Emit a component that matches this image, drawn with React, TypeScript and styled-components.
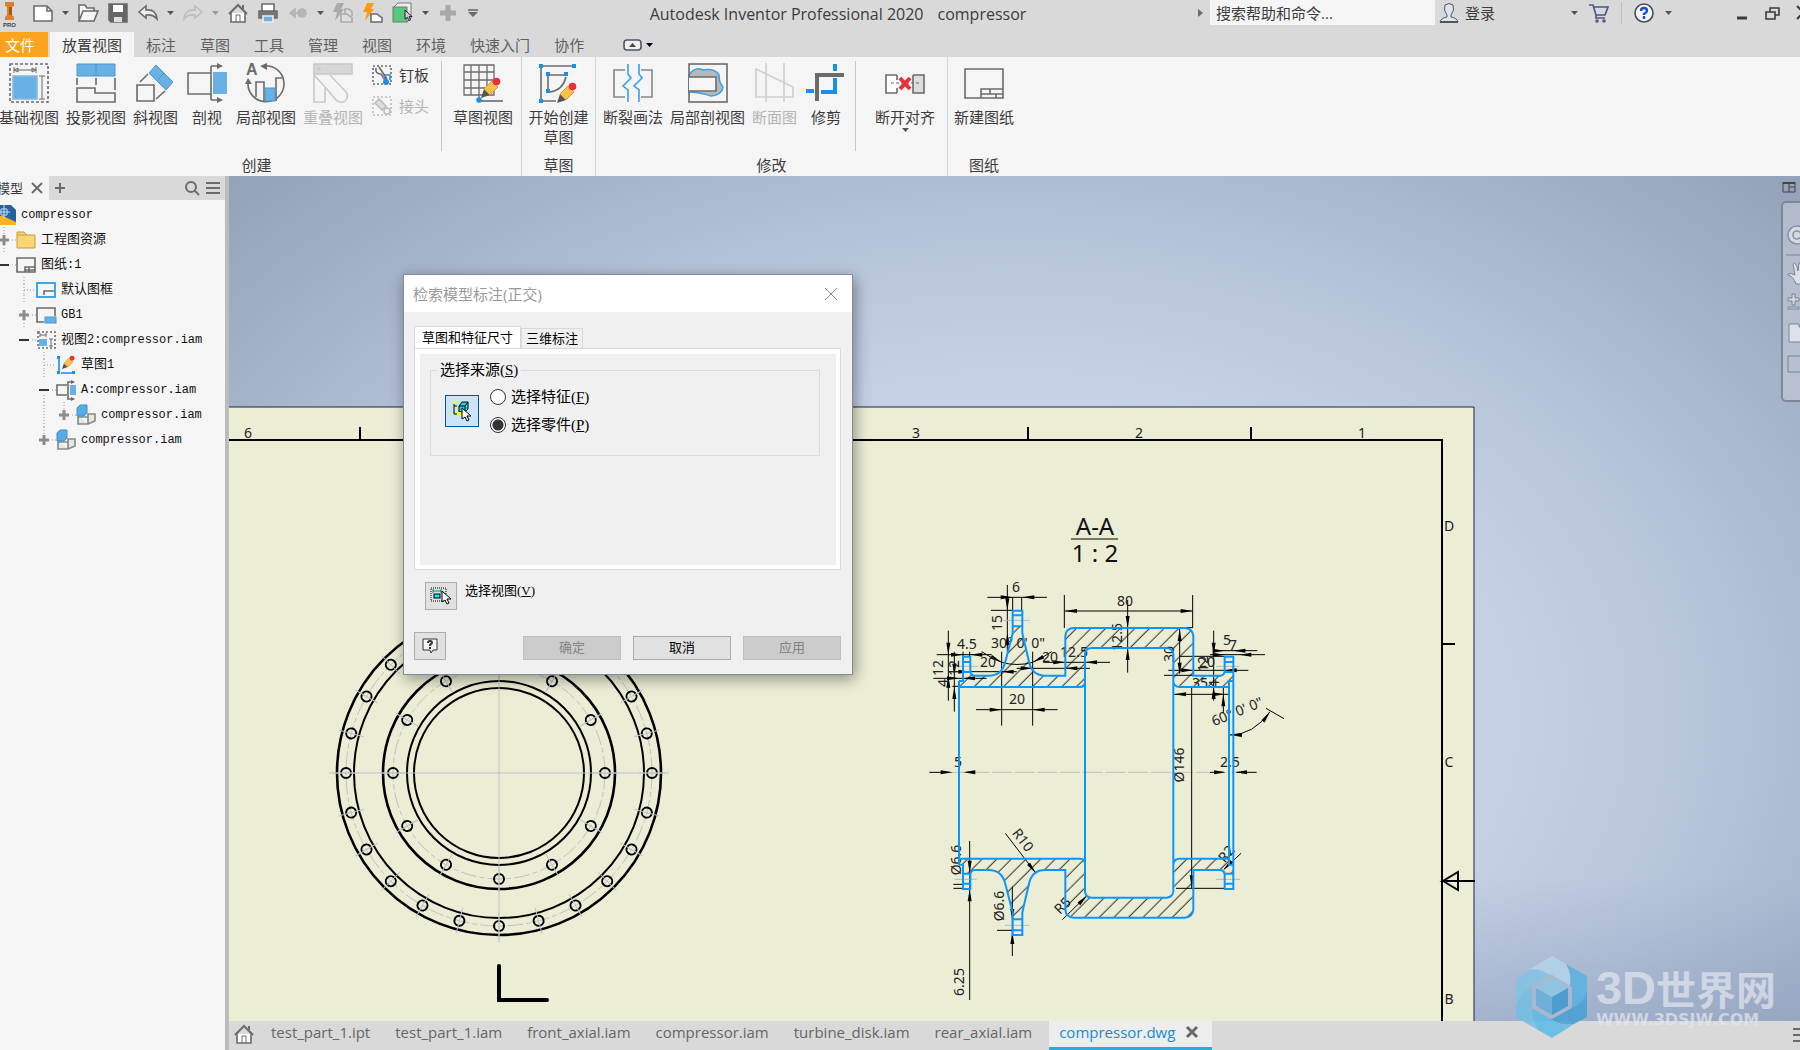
import React from "react";
import styled, { createGlobalStyle } from "styled-components";

const UI = '"Open Sans", "Noto Sans CJK SC", sans-serif';
const MONO = '"Liberation Mono", "Noto Sans CJK SC", monospace';
const G = "#6b6b6b";
const B = "#68b0e6";
const BL = "#1a8fe8";

const Global = createGlobalStyle`
  * { box-sizing: border-box; }
  body { margin: 0; overflow: hidden; background: #f5f5f5; color: #3c3c3c; font: 15px/20px ${UI}; }
  button, input { font: inherit; color: inherit; }
  button { margin: 0; padding: 0; border: 0; background: none; }
  svg { display: block; flex: none; overflow: visible; }
`;

const Shell = styled.div`
  height: 100vh;
  display: flex;
  flex-direction: column;
  overflow: hidden;
`;

/* ---------- title bar ---------- */
const TitleBar = styled.header`
  display: flex;
  align-items: flex-start;
  height: 32px;
  background: #d9d9d9;
`;
const QuickAccess = styled.div`
  display: flex;
  align-items: center;
  gap: 10px;
  height: 25px;
`;
const ProLogo = styled.div`
  width: 23px;
  height: 25px;
`;
const IconButton = styled.button<{ $w?: number }>`
  display: flex;
  align-items: center;
  justify-content: center;
  width: ${(p) => p.$w ?? 20}px;
  height: 25px;
`;
const Title = styled.h1`
  flex: 1;
  margin: 0;
  display: flex;
  justify-content: center;
  gap: 14px;
  font-size: 16px;
  font-weight: 400;
  line-height: 28px;
  white-space: nowrap;
`;
const Search = styled.input`
  width: 225px;
  height: 25px;
  margin-left: 6px;
  padding: 0 6px;
  border: 0;
  background: #f5f5f5;
  &::placeholder { color: #3c3c3c; opacity: 1; }
`;
const SignIn = styled.button`
  display: flex;
  align-items: center;
  gap: 6px;
  width: 133px;
  height: 25px;
  margin-left: 4px;
`;
const Account = styled.div`
  display: flex;
  align-items: center;
  gap: 12px;
  height: 25px;
`;
const Separator = styled.span`
  width: 1px;
  height: 22px;
  background: #bdbdbd;
`;
const WindowControls = styled.div`
  display: flex;
  gap: 16px;
  height: 25px;
  margin: 0 -10px 0 65px;
`;

/* ---------- ribbon ---------- */
const TabRow = styled.nav`
  display: flex;
  height: 25px;
  background: #d9d9d9;
`;
const RibbonTab = styled.button<{ $active?: boolean }>`
  padding: 0 12px;
  background: ${(p) => (p.$active ? "#f5f5f5" : "transparent")};
  color: ${(p) => (p.$active ? "#3c3c3c" : "#5f5f5f")};
  white-space: nowrap;
`;
const FileTab = styled.button`
  width: 48px;
  margin-right: 2px;
  padding-right: 8px;
  background: #fba31c;
  color: #fff;
`;
const PanelToggle = styled.button`
  display: flex;
  align-items: center;
  gap: 5px;
  margin-left: 27px;
`;
const Ribbon = styled.section`
  display: flex;
  height: 119px;
  background: #f5f5f5;
`;
const Panel = styled.div<{ $w: number; $last?: boolean; $bleed?: boolean }>`
  display: flex;
  flex-direction: column;
  justify-content: space-between;
  width: ${(p) => p.$w}px;
  margin-left: ${(p) => (p.$bleed ? -8 : 0)}px;
  border-right: ${(p) => (p.$last ? 0 : 1)}px solid #d4d4d4;
`;
const PanelBody = styled.div<{ $center?: boolean }>`
  display: flex;
  justify-content: ${(p) => (p.$center ? "center" : "flex-start")};
  gap: 7px;
  padding: 6px 0 0 ${(p) => (p.$center ? 0 : 7)}px;
  height: 96px;
`;
const PanelName = styled.div`
  height: 21px;
  text-align: center;
`;
const Tool = styled.button<{ $off?: boolean }>`
  display: flex;
  flex-direction: column;
  align-items: center;
  flex: none;
  min-width: 44px;
  color: ${(p) => (p.$off ? "#b4b4b4" : "#3c3c3c")};
  white-space: nowrap;
  & > span { margin-top: 4px; white-space: pre-line; }
`;
const SmallTools = styled.div`
  display: flex;
  flex-direction: column;
  gap: 11px;
  padding: 2px 5px 0 2px;
`;
const SmallTool = styled.button<{ $off?: boolean }>`
  display: flex;
  align-items: center;
  gap: 7px;
  color: ${(p) => (p.$off ? "#b4b4b4" : "#3c3c3c")};
`;
const InnerRule = styled.span<{ $after: number }>`
  width: 1px;
  height: 90px;
  margin: -2px ${(p) => p.$after}px 0 0;
  background: #c8c8c8;
`;

/* ---------- workspace ---------- */
const Work = styled.main`
  flex: 1;
  display: flex;
  min-height: 0;
`;
const Browser = styled.aside`
  width: 229px;
  flex: none;
  overflow: hidden;
  background: #f5f5f5;
  border-right: 4px solid #bcbcbc;
`;
const BrowserHead = styled.div`
  display: flex;
  align-items: center;
  height: 24px;
  padding-right: 5px;
  gap: 6px;
  background: #d9d9d9;
  font-size: 13px;
`;
const BrowserTab = styled.div`
  display: flex;
  align-items: center;
  gap: 9px;
  width: 49px;
  height: 24px;
  background: #f5f5f5;
  & > span { margin-left: -3px; white-space: nowrap; }
`;
const Grow = styled.span`
  flex: 1;
`;
const Tree = styled.ul`
  list-style: none;
  margin: 2px 0 0 -4px;
  padding: 0;
`;
const TreeRow = styled.li<{ $depth: number }>`
  display: flex;
  align-items: center;
  height: 25px;
  padding-left: ${(p) => Math.max(0, p.$depth - 1) * 20}px;
  color: #111;
  font: 12px/16px ${MONO};
  white-space: pre;
`;
const TreeLabel = styled.button`
  display: flex;
  align-items: baseline;
  margin-left: 5px;
`;
const Han = styled.span`
  font-size: 13px;
`;
const Stage = styled.div`
  flex: 1;
  min-width: 0;
  display: flex;
  flex-direction: column;
  position: relative;
`;
const Canvas = styled.div`
  flex: 1;
  position: relative;
  overflow: hidden;
  background:
    linear-gradient(to top, rgba(132, 149, 182, 0.4), rgba(132, 149, 182, 0) 17%),
    radial-gradient(ellipse farthest-corner at 50% 64%, #ccd9eb 0%, #c8d5e8 38%, #b7c5db 62%, #a3b2c9 82%, #93a1b9 100%);
`;
const Drawing = styled.svg`
  width: 100%;
  height: 100%;
  font-family: "Noto Sans", sans-serif;
`;
const ViewLayout = styled.button`
  position: absolute;
  top: 6px;
  right: 5px;
`;
const NavBar = styled.div`
  position: absolute;
  top: 25px;
  right: -22px;
  width: 41px;
  height: 201px;
  display: flex;
  flex-direction: column;
  gap: 10px;
  padding: 22px 4px;
  border: 2px solid #7b8898;
  border-radius: 5px;
  background: rgba(200, 206, 214, 0.55);
`;
const Watermark = styled.div`
  position: absolute;
  right: 24px;
  bottom: 12px;
  display: flex;
  gap: 8px;
`;
const WatermarkText = styled.div`
  padding-top: 8px;
  color: rgba(228, 232, 240, 0.7);
  white-space: nowrap;
`;
const WatermarkName = styled.div`
  display: flex;
  align-items: center;
  height: 47px;
  font: bold 47px/46px "Liberation Sans", sans-serif;
`;
const WatermarkHan = styled.span`
  font: bold 40px/46px "Noto Sans CJK SC", sans-serif;
`;
const WatermarkUrl = styled.div`
  font: bold 16px/18px "DejaVu Sans", sans-serif;
`;

/* ---------- document tabs ---------- */
const DocTabs = styled.nav`
  display: flex;
  gap: 1px;
  height: 29px;
  padding-left: 1px;
  background: #d9d9d9;
  color: #666;
`;
const DocTab = styled.button`
  padding: 0 12px 7px;
  white-space: nowrap;
`;
const ActiveDoc = styled.div`
  display: flex;
  align-items: center;
  gap: 12px;
  margin-left: 4px;
  padding: 0 15px 4px 10px;
  border-bottom: 3px solid #2ea9e0;
  background: #ededed;
  color: #148dd0;
`;

/* ---------- dialog ---------- */
const Dialog = styled.section`
  position: absolute;
  left: 174px;
  top: 98px;
  width: 450px;
  border: 1px solid #868c94;
  background: #f0f0f0;
  color: #000;
  box-shadow: 2px 4px 14px rgba(0, 0, 0, 0.4);
  font: 13px/18px "Liberation Serif", "Noto Sans CJK SC", serif;
`;
const DialogHead = styled.div`
  display: flex;
  align-items: center;
  justify-content: space-between;
  height: 37px;
  padding: 0 15px 0 9px;
  background: #fff;
  color: #999;
  font: 15px/20px ${UI};
`;
const DialogBody = styled.div`
  padding: 14px 11px 14px 10px;
`;
const DialogTabs = styled.div`
  display: flex;
  align-items: flex-end;
`;
const DialogTab = styled.button<{ $active?: boolean }>`
  height: ${(p) => (p.$active ? 22 : 20)}px;
  padding: ${(p) => (p.$active ? "0 7px" : "0 4px")};
  border: 1px solid #d9d9d9;
  border-bottom: 0;
  background: ${(p) => (p.$active ? "#fff" : "#f0f0f0")};
`;
const DialogPage = styled.div`
  height: 222px;
  padding: 5px 4px 4px 5px;
  border: 1px solid #d9d9d9;
  background: #fff;
`;
const PageInner = styled.div`
  height: 100%;
  padding: 7px 16px 0 10px;
  background: #f0f0f0;
`;
const Source = styled.fieldset`
  display: flex;
  align-items: center;
  gap: 11px;
  height: 95px;
  margin: 0;
  padding: 0 14px 12px;
  border: 1px solid #dcdcdc;
  font-size: 15px;
  & > legend { margin-left: -8px; padding: 0 3px; }
`;
const Choices = styled.div`
  display: flex;
  flex-direction: column;
  gap: 8px;
`;
const Choice = styled.label`
  display: flex;
  align-items: center;
  gap: 5px;
  height: 20px;
`;
const Radio = styled.input`
  appearance: none;
  width: 16px;
  height: 16px;
  margin: 0;
  border: 1px solid #333;
  border-radius: 50%;
  background: #fff;
  &:checked { background: radial-gradient(circle, #333 0 5px, #fff 6px); }
`;
const PickButton = styled.button<{ $on?: boolean }>`
  display: flex;
  align-items: center;
  justify-content: center;
  width: ${(p) => (p.$on ? 34 : 32)}px;
  height: ${(p) => (p.$on ? 32 : 28)}px;
  border: 1px solid ${(p) => (p.$on ? "#005499" : "#adadad")};
  background: ${(p) => (p.$on ? "#cce4f7" : "#e1e1e1")};
`;
const PickView = styled.div`
  display: flex;
  gap: 8px;
  padding: 12px 0 22px 11px;
`;
const Actions = styled.div`
  display: flex;
  align-items: flex-end;
  gap: 12px;
`;
const Action = styled.button`
  width: 98px;
  height: 24px;
  border: 1px solid #adadad;
  background: #e1e1e1;
  &:disabled { background: #ccc; border-color: #bfbfbf; color: #838383; }
`;

/* ---------- small drawings ---------- */
type IconProps = { w?: number; h?: number; c?: string; sw?: number; children: React.ReactNode };
const Ico = ({ w = 20, h = 20, c = G, sw = 1.6, children }: IconProps) => (
  <svg width={w} height={h} viewBox={`0 0 ${w} ${h}`} fill="none" stroke={c} strokeWidth={sw} aria-hidden="true">
    {children}
  </svg>
);
const Caret = ({ c = "#555" }: { c?: string }) => (
  <svg width="5" height="5" viewBox="0 0 5 5" aria-hidden="true"><path d="M-1 1H6L2.5 5Z" fill={c} /></svg>
);
const Cross = ({ s = 10, c = G, sw = 2 }: { s?: number; c?: string; sw?: number }) => (
  <Ico w={s} h={s} c={c} sw={sw}><path d={`M0 0L${s} ${s}M${s} 0L0 ${s}`} /></Ico>
);
const House = () => (
  <Ico><path d="M3 10V19H17V10" fill="#fff" /><path d="M1 11L10 2L19 11M15 2V6" strokeWidth="2" /><path d="M8 19V12H12V19" strokeWidth="1" /></Ico>
);
const Pencil = ({ x, y, s = 1 }: { x: number; y: number; s?: number }) => (
  <g transform={`translate(${x} ${y}) scale(${s})`} stroke="none">
    <path d="M0 20L3 11L9 17Z" fill="#555" />
    <path d="M3 11L11 3L17 9L9 17Z" fill="#fbc04a" stroke="#d09a38" strokeWidth="1" />
    <circle cx="15.500" cy="3.500" r="3.800" fill="#ea2f36" />
  </g>
);
const Cursor = ({ x, y, c = "#fff" }: { x: number; y: number; c?: string }) => (
  <path transform={`translate(${x} ${y})`} d="M0 0V11L3 9L5 13L7 12L5 8H9Z" fill={c} stroke="#000" strokeWidth="1" />
);

const BaseIcon = () => (
  <Ico w={40} h={40}>
    <rect x="1" y="1" width="38" height="38" strokeDasharray="3 2" />
    <path d="M5 4V10M27 4V10M5 7H27M5 7L9 5V9ZM27 7L23 5V9ZM33 13V36M30 13H36M30 36H36" strokeWidth="1" />
    <rect x="4" y="13" width="24" height="23" fill={B} stroke="#88b9de" />
  </Ico>
);
const ProjectedIcon = () => (
  <Ico w={40} h={40}>
    <path d="M1 1H39V13H1ZM20 1V13" fill={B} stroke="#4d96cc" strokeWidth="1" />
    <path d="M1 15V22M20 15V22M39 15V27M1 25H19V30H39V39H1Z" />
  </Ico>
);
const AuxIcon = () => (
  <Ico w={40} h={40}>
    <path d="M20 2L37 19L30 27L13 10Z" fill={B} stroke="#4d96cc" strokeWidth="1" />
    <path d="M22 17L28 10" stroke="#4d96cc" strokeWidth="1" />
    <path d="M1 22H18V38H1ZM4 19L12 11M20 36L29 28" />
  </Ico>
);
const SectionIcon = () => (
  <Ico w={40} h={40}>
    <path d="M24 10H1V31H24M24 3V37M24 3H34M24 37H34" />
    <path d="M30 0L36 3L30 6ZM30 34L36 37L30 40Z" fill={G} stroke="none" />
    <rect x="26" y="9" width="14" height="22" fill={B} stroke="none" />
  </Ico>
);
const DetailIcon = () => (
  <Ico w={40} h={40}>
    <text x="0" y="12" fontFamily="Liberation Sans" fontWeight="bold" fontSize="16" fill={G} stroke="none">A</text>
    <path d="M17 3A18 18 0 1 1 2 20" />
    <path d="M21 0V7L14 3ZM-1 21H6L2 15Z" fill={G} stroke="none" />
    <path d="M10 34V19H18V39M30 38V15H36M30 15V24" />
    <rect x="19" y="25" width="10" height="13" fill={B} stroke="#4d96cc" strokeWidth="1" />
  </Ico>
);
const OverlayIcon = () => (
  <Ico w={40} h={40} c="#c9c9c9">
    <path d="M1 12V39H12V24M1 12L12 24L24 38Q30 41 33 37Q36 33 33 29L17 12" />
    <rect x="1" y="1" width="38" height="10" fill="#d6d6d6" />
    <circle cx="6" cy="6" r="1" />
  </Ico>
);
const NailIcon = () => (
  <Ico>
    <rect x="1" y="1" width="18" height="18" strokeDasharray="2 2" />
    <path d="M4 3Q3 9 9 9L14 15M7 2Q9 5 11 8L15 14" />
    <path d="M10 11L14 17" stroke="#b46be8" />
    <circle cx="14" cy="17" r="3" fill={BL} stroke="none" /><path d="M13 10H18V15" stroke={BL} />
  </Ico>
);
const JointIcon = () => (
  <Ico c="#bdbdbd">
    <rect x="1" y="1" width="18" height="18" strokeDasharray="2 2" />
    <path d="M3 7L7 3L14 10L10 14Z" fill="#ddd" /><circle cx="15" cy="15" r="3" />
  </Ico>
);
const SketchViewIcon = () => (
  <Ico w={40} h={40}>
    <path d="M1 2H31V32H1ZM8 2V32M16 2V38M24 2V32M1 9H31M1 17H31M1 25H31" strokeWidth="1.3" />
    <path d="M18 38H40" /><circle cx="16" cy="37" r="2" fill={BL} stroke={BL} />
    <Pencil x={18} y={15} />
  </Ico>
);
const StartSketchIcon = () => (
  <Ico w={40} h={40}>
    <path d="M3 5V36M5 3H34M5 38H18M10 13V26M12 12H26M28 14Q25 27 12 29" />
    <path d="M1 1h4v4h-4zM34 1h4v4h-4zM1 36h4v4h-4zM8 9h4v4h-4zM26 9h4v4h-4zM8 26h4v4h-4z" fill={BL} stroke="none" />
    <Pencil x={19} y={20} />
  </Ico>
);
const BreakIcon = () => (
  <Ico w={40} h={40}>
    <path d="M12 7H1V34H12M28 7H39V34H28" stroke="#888" />
    <path d="M15 1V11L18 15L10 23L15 27V39M26 1V11L29 15L21 23L26 27V39" stroke="#3aa0ea" />
  </Ico>
);
const BreakOutIcon = () => (
  <Ico w={40} h={40}>
    <path d="M1 12Q7 3 15 7Q27 5 31 12Q31 20 35 24Q34 32 23 33Q15 30 1 29Z" fill="#b9b9b9" stroke="#3aa0ea" />
    <rect x="1" y="1" width="38" height="38" /><path d="M1 14H28V28H1" fill="#f5f5f5" />
  </Ico>
);
const SliceIcon = () => (
  <Ico w={40} h={40} c="#cfcfcf"><path d="M1 6L38 24V34H1ZM11 0V39M29 0V39" /></Ico>
);
const TrimIcon = () => (
  <Ico w={40} h={40} sw={4}><path d="M29 1V8M29 15V29H15M8 28H0" stroke={BL} /><path d="M11 38V12H38" /></Ico>
);
const AlignIcon = () => (
  <Ico w={40} h={40}>
    <path d="M12 12H1V30H12M12 12V17M12 25V30" fill="#fff" /><path d="M28 12H39V30H28V12" fill="#ddd" />
    <path d="M6 20H35" strokeDasharray="3 2" strokeWidth="1" /><path d="M15 15L25 26M25 15L15 26" stroke="#ea2f36" strokeWidth="4" />
  </Ico>
);
const SheetIcon = () => (
  <Ico w={40} h={40}><path d="M1 6H39V35H1ZM17 35V26H39M17 31H39M26 26V31M32 31V35" /></Ico>
);

const CubePair = () => (
  <Ico>
    <path d="M2 10V19H12L19 16V9H12V19M2 12H12" stroke="#888" fill="#e6e6e6" />
    <path d="M1 3L4 0H11V8L8 11H1Z" fill="#58ace6" stroke="#3f8fc8" strokeWidth="1" />
  </Ico>
);
const treeIcons: Record<string, React.ReactNode> = {
  root: <Ico><path d="M0 0H15L20 5V20H0Z" fill="#24619f" stroke="none" /><path d="M0 11H7L20 17V20H0Z" fill="#fbb220" stroke="none" /><path d="M8 0V14M0 7H14M5 4H11V10H5Z" stroke="#cfe2f5" strokeWidth="1" /></Ico>,
  folder: <Ico sw={1} c="#c69a3e"><path d="M1 2H8L10 4V5H19V18H1Z" fill="#f7d673" /><path d="M1 5H10" /></Ico>,
  sheet: <Ico><path d="M1 3H19V17H1ZM9 17V12H19M13 12V17M9 15H19" /></Ico>,
  frame: <Ico><rect x="1" y="3" width="18" height="14" stroke={BL} /><path d="M8 15V11H18" /></Ico>,
  block: <Ico><path d="M8 17H1V3H19V11" /><rect x="9" y="12" width="11" height="6" fill={B} stroke="#4d96cc" strokeWidth="1" /></Ico>,
  view: <Ico><rect x="2" y="2" width="17" height="16" strokeDasharray="2 2" /><path d="M4 5H10M4 3V7M10 3V7M15 9V16M13 9H17M13 16H17" strokeWidth="1" /><rect x="3" y="9" width="8" height="7" fill={B} stroke="none" /></Ico>,
  sketch: <Ico><path d="M3 4V16M5 18H16" stroke={BL} /><path d="M1 1h3v3h-3zM1 16h3v3h-3zM16 16h3v3h-3z" fill={BL} stroke="none" /><Pencil x={6} y={1} s={0.65} /></Ico>,
  section: <Ico><path d="M11 5H1V15H11M18 2H12V19H18" /><rect x="14" y="5" width="6" height="10" fill={B} stroke="none" /><path d="M15 0L19 2L15 4ZM15 17L19 19L15 21Z" fill={G} stroke="none" /></Ico>,
  cubes: <CubePair />,
};

type Node = { depth: number; icon: string; label: string; mark?: "+" | "-"; up?: boolean; down?: boolean; pass?: boolean };
const nodes: Node[] = [
  { depth: 0, icon: "root", label: "compressor" },
  { depth: 1, icon: "folder", label: "工程图资源", mark: "+", up: true, down: true },
  { depth: 1, icon: "sheet", label: "图纸:1", mark: "-" },
  { depth: 2, icon: "frame", label: "默认图框", up: true, down: true },
  { depth: 2, icon: "block", label: "GB1", mark: "+", down: true },
  { depth: 2, icon: "view", label: "视图2:compressor.iam", mark: "-" },
  { depth: 3, icon: "sketch", label: "草图1", up: true, down: true },
  { depth: 3, icon: "section", label: "A:compressor.iam", mark: "-", down: true },
  { depth: 4, icon: "cubes", label: "compressor.iam", mark: "+", up: true, pass: true },
  { depth: 3, icon: "cubes", label: "compressor.iam", mark: "+", up: true },
];
const Expander = ({ n }: { n: Node }) => (
  <svg width="20" height="25" viewBox="0 0 20 25" fill="none" aria-hidden="true">
    <g stroke="#999" strokeWidth="1" strokeDasharray="1 2">
      {n.up && <path d="M8 0V7" />}
      {n.down && <path d="M8 18V25" />}
      {!n.mark && <path d="M8 7V18M8 13H19" />}
      {n.mark && <path d="M16 13H20" />}
      {n.pass && <path d="M-12 0V25" />}
    </g>
    {n.mark === "+" && <path d="M3 13H13M8 8V18" stroke="#8c8c8c" strokeWidth="3" />}
    {n.mark === "-" && <path d="M3 13H13" stroke="#333" strokeWidth="2" />}
  </svg>
);
const Mixed = ({ text }: { text: string }) => (
  <>{text.split(/([\u4e00-\u9fff]+)/).map((t, i) => (i % 2 ? <Han key={i}>{t}</Han> : t))}</>
);

/* ---------- drawing sheet ---------- */
const PROFILE =
  "M117 543H129V470H151V515Q153 527 165 527H205C235 527 250 512 256 485L278 400V332H307V400L328 490Q338 527 375 527H436V408Q438 384 462 384H795Q818 386 820 408V527H902Q912 526 914 515V470H940V820" +
  "M117 543V820M117 561H480Q494 561 495 545M495 820V462Q497 444 515 444H740Q758 446 760 462V820M760 545Q763 561 778 561H927M927 820V543H940" +
  "M129 486H151M129 516H151M278 346H307M278 379H307M914 486H940M914 516H940";
const HATCHED =
  "M117 543H129V516H151Q153 527 165 527H205C235 527 250 512 256 485L278 400V379H307V400L328 490Q338 527 375 527H436V408Q438 384 462 384H795Q818 386 820 408V527H902Q912 526 914 516H940V543H927V561H778Q763 561 760 545V462Q758 444 740 444H515Q497 444 495 462V545Q494 561 480 561H117Z";
const DIM_LINES =
  "M202 292H381M278 292V332M305 292V332M262 255V455M213 331H278" +
  "M435 333H818M433 285V384M818 285V384M623 300V518M779 387V520M732 526H820M745 511H985M798 383H818" +
  "M50 464H215M129 455V470M149 455V470M85 515H290M40 535H200M97 559H117M85 392V602M103 455V635" +
  "M290 505H510M370 487H570M168 629H413M245 455V677M338 455V677M185 455Q215 475 245 487Q290 500 338 487Q365 475 395 455" +
  "M881 392V602M880 452H1012M870 464H1035M762 583H925M910 560V640M780 469H914M815 561V1165M768 1165H914" +
  "M28 817H80M950 817H1010M870 817H910M140 817H165M930 705Q1000 705 1050 635M1038 625L1092 656" +
  "M256 1000L348 1120M427 1259L500 1188M963 1060L912 1108M149 1023V1500M100 1153H129M100 1165H129M277 1160V1368M231 1291H278";
const ARROWS: [number, number, number][] = [
  [278, 292, 0], [307, 292, 180], [262, 331, 90], [262, 400, 270], [435, 333, 180], [818, 333, 0],
  [623, 384, 90], [623, 444, 270], [779, 387, 270], [779, 524, 90], [129, 464, 0], [151, 464, 180],
  [85, 464, 90], [85, 527, 270], [103, 527, 90], [103, 561, 270], [117, 535, 0], [129, 535, 180],
  [245, 515, 180], [151, 515, 0], [338, 505, 0], [436, 505, 180], [436, 487, 0], [495, 487, 180],
  [245, 487, 28], [338, 487, 152], [245, 629, 0], [338, 629, 180], [881, 464, 90], [881, 561, 270],
  [914, 452, 0], [940, 452, 180], [914, 464, 0], [958, 464, 180], [820, 511, 0], [914, 511, 180],
  [762, 583, 180], [914, 583, 0], [910, 583, 270], [930, 705, 180], [1050, 635, 306], [98, 817, 0],
  [130, 817, 180], [918, 817, 0], [945, 817, 180], [348, 1120, 52], [502, 1186, 315], [910, 1110, 135],
  [149, 1118, 90], [149, 1168, 270], [277, 1263, 90], [277, 1296, 270], [815, 1162, 90],
];
const CENTER_LINES = "M108 499H175M250 361H330M888 499H958M103 1138H170M255 1276H327M888 1138H960";
const DIM_TEXT: [number, number, string, number?][] = [
  [1016, 592, "6"], [1125, 606, "80"], [1002, 623, "15", -90], [967, 649, "4.5"], [1018, 648, "30° 0' 0\""],
  [943, 668, "12", -90], [948, 683, "4", -90], [959, 668, "12", -90], [988, 667, "20"], [1050, 662, "20"],
  [1074, 657, "12.5"], [1122, 637, "12.5", -90], [1174, 654, "30", -90], [1207, 667, "20"], [1208, 664, "12", -90],
  [1227, 645, "5"], [1233, 650, "7"], [1200, 688, "35"], [1219, 684, "4", -90], [1017, 704, "20"],
  [1239, 716, "60° 0' 0\"", -22], [1184, 765, "Ø146", -90], [958, 767, "5"], [1230, 767, "2.5"], [1019, 843, "R10", 52],
  [961, 860, "Ø6.6", -90], [1004, 906, "Ø6.6", -90], [964, 982, "6.25", -90], [1066, 909, "R5", -45], [1230, 857, "R2", -50],
];
const FRAME_TEXT: [number, number, string][] = [
  [248, 438, "6"], [916, 438, "3"], [1139, 438, "2"], [1362, 438, "1"], [1449, 531, "D"], [1449, 767, "C"], [1449, 1004, "B"],
];
const ring = (count: number, r: number) =>
  Array.from({ length: count }, (_, i) => {
    const a = (i * 2 * Math.PI) / count;
    return { x: Math.cos(a) * r, y: Math.sin(a) * r, deg: (i * 360) / count };
  });

const Sheet = () => (
  <Drawing aria-label="compressor.dwg">
    <defs>
      <pattern id="hatch" width="31" height="31" patternUnits="userSpaceOnUse" patternTransform="rotate(45)">
        <path d="M15 0V31" stroke="#000" strokeWidth="2.4" />
      </pattern>
      <pattern id="hatchFlip" width="31" height="31" patternUnits="userSpaceOnUse" patternTransform="rotate(-45)">
        <path d="M15 0V31" stroke="#000" strokeWidth="2.4" />
      </pattern>
    </defs>
    <g transform="translate(-229 -176)" fill="none" stroke="#000">
      <path d="M200 407H1474V1100H200Z" fill="#ecedd5" stroke="#1b2447" />
      <path d="M200 440H1442V1100" strokeWidth="2" />
      <path d="M360 427V440M1028 427V440M1251 427V440M1442 644H1455M1475 881H1443L1458 872V890L1443 881" strokeWidth="2" />
      <g fill="#1c1c1c" stroke="none" fontSize="14" textAnchor="middle">
        {FRAME_TEXT.map(([x, y, t]) => <text key={t} x={x} y={y}>{t}</text>)}
      </g>

      <g transform="translate(499 773)">
        <circle r="153" stroke="#c0c0c8" strokeDasharray="16 3 5 3" />
        <circle r="106" stroke="#c0c0c8" strokeDasharray="16 3 5 3" />
        <circle r="162" strokeWidth="2.6" />
        <circle r="145" strokeWidth="2" />
        <circle r="116" strokeWidth="2.6" />
        <circle r="92" strokeWidth="2" />
        <circle r="85" strokeWidth="2" />
        {[...ring(24, 153), ...ring(12, 106)].map((p, i) => (
          <g key={i} transform={`translate(${p.x} ${p.y}) rotate(${p.deg})`}>
            <circle r="5" strokeWidth="2" />
            <path d="M-13 0H13" stroke="#c0c0c8" />
          </g>
        ))}
        <path d="M-170 0H170M0 -170V170" stroke="#c0c0c8" />
      </g>
      <path d="M499 966V1000H547" strokeWidth="4" strokeLinecap="round" />

      <g transform="translate(920 500) scale(0.33333)">
        <path d={HATCHED} fill="url(#hatch)" stroke="none" />
        <path d={HATCHED} transform="translate(0 1637) scale(1 -1)" fill="url(#hatchFlip)" stroke="none" />
        <path d="M80 817H870" stroke="#c0c0c8" strokeWidth="3" strokeDasharray="60 8" />
        <path d={DIM_LINES} strokeWidth="3" />
        <path d={CENTER_LINES} stroke="#b8b8c0" strokeWidth="3" />
        <g fill="#000" stroke="none">
          {ARROWS.map(([x, y, r], i) => <path key={i} d="M0 0L-36 -6V6Z" transform={`translate(${x} ${y}) rotate(${r})`} />)}
        </g>
      </g>
      <g fill="#222" stroke="none" fontSize="14" textAnchor="middle">
        {DIM_TEXT.map(([x, y, t, r], i) => <text key={i} x={x} y={y} transform={r ? `rotate(${r} ${x} ${y})` : undefined}>{t}</text>)}
      </g>
      <g transform="translate(920 500) scale(0.33333)" stroke="#0a96ff" strokeWidth="6">
        <path d={PROFILE} />
        <path d={PROFILE} transform="translate(0 1637) scale(1 -1)" />
      </g>
      <g fill="#111" stroke="none" fontSize="24" textAnchor="middle">
        <text x="1095" y="535">A-A</text>
        <text x="1095" y="562">1 : 2</text>
      </g>
      <path d="M1071 539H1118" />
    </g>
  </Drawing>
);

const BigTool = ({ icon, name, off, menu }: { icon: React.ReactNode; name: string; off?: boolean; menu?: boolean }) => (
  <Tool $off={off}>{icon}<span>{name}</span>{menu && <Caret />}</Tool>
);

export default function App() {
  const [source, setSource] = React.useState("part");
  return (
    <Shell>
      <Global />
      <TitleBar>
        <QuickAccess>
          <ProLogo>
            <svg width="20" height="26" viewBox="0 0 20 26" aria-hidden="true">
              <path d="M5 2H14V6L12 7V15L14 17V20H5V17L7 15V7L5 6Z" fill="#d9812e" />
              <path d="M9 7H12V15H9Z" fill="#a8561b" />
              <text x="3" y="27" fontFamily="Liberation Sans" fontWeight="bold" fontSize="6" fill="#444">PRO</text>
            </svg>
          </ProLogo>
          <IconButton aria-label="新建"><Ico><path d="M1 3H14L19 8V18H1Z" fill="#fff" /><path d="M14 3V8H19" /></Ico></IconButton>
          <Caret />
          <IconButton aria-label="打开"><Ico><path d="M1 18V2H7L9 5H16V8M1 18L5 8H20L16 18Z" fill="#f5f5f5" /></Ico></IconButton>
          <IconButton aria-label="保存"><Ico><path d="M1 1H19V19H3L1 17Z" fill="#666" /><path d="M5 2H15V9H5Z" fill="#fff" stroke="none" /><path d="M6 14H14V19H6Z" fill="#ddd" stroke="none" /></Ico></IconButton>
          <IconButton aria-label="撤销"><Ico><path d="M1 9L8 3V7Q18 6 19 16Q15 11 8 12V15Z" fill="#eee" /></Ico></IconButton>
          <Caret />
          <IconButton aria-label="重做"><Ico c="#bdbdbd"><path d="M19 9L12 3V7Q2 6 1 16Q5 11 12 12V15Z" /></Ico></IconButton>
          <Caret c="#999" />
          <IconButton aria-label="主页"><House /></IconButton>
          <IconButton aria-label="打印"><Ico><path d="M4 8V1H16V8" fill="#fff" /><path d="M1 8H19V15H1Z" fill="#777" /><path d="M5 13H15V19H5Z" fill={B} stroke="#eee" /></Ico></IconButton>
          <IconButton aria-label="返回"><Ico c="#b5b5b5"><path d="M2 10L7 6V14Z" fill="#b5b5b5" /><circle cx="14" cy="10" r="4" fill="#b5b5b5" /><path d="M6 10H12" /></Ico></IconButton>
          <Caret />
          <IconButton aria-label="更新"><Ico c="#aaa"><path d="M4 0H11L8 6H11L2 18L4 9H0Z" fill="#aaa" stroke="none" /><path d="M8 11H14L19 15V19H8ZM12 10V6H16L19 9V13" fill="#ddd" /></Ico></IconButton>
          <IconButton aria-label="全部更新"><Ico><path d="M4 0H11L8 6H11L2 18L4 9H0Z" fill="#ff9a0e" stroke="none" /><path d="M8 11H14L19 15V19H8Z" fill="#fff" /></Ico></IconButton>
          <IconButton aria-label="选择"><Ico c="#777" sw={1}><path d="M1 4L5 0H18V15L14 19" fill="#eee" /><rect x="0" y="4" width="14" height="15" fill="#58c97c" /><g transform="scale(0.8)"><Cursor x={15} y={9} c="#ccc" /></g></Ico></IconButton>
          <Caret />
          <IconButton aria-label="添加"><Ico c="#a8a8a8" sw={5}><path d="M2 10H18M10 2V18" /></Ico></IconButton>
          <IconButton $w={10} aria-label="自定义"><Ico w={10} h={8}><path d="M0 1H10" /><path d="M0 3H10L5 8Z" fill={G} stroke="none" /></Ico></IconButton>
        </QuickAccess>
        <Title><span>Autodesk Inventor Professional 2020</span><span>compressor</span></Title>
        <IconButton $w={6} aria-label="展开"><Ico w={6} h={8}><path d="M0 0L5 4L0 8Z" fill={G} stroke="none" /></Ico></IconButton>
        <Search aria-label="搜索" placeholder="搜索帮助和命令..." />
        <SignIn>
          <Ico c="#4e5663" sw={1}><path d="M1 19Q2 15 8 14V12Q4 7 6 2Q10 -1 14 2Q16 7 12 12V14Q18 15 19 19Z" fill="#dfe5ec" /><path d="M1 19H19" strokeWidth="2" /></Ico>
          登录
        </SignIn>
        <Account>
          <Caret />
          <IconButton aria-label="购物车"><Ico c="#4a558a"><path d="M0 2H4L7 12H16L19 4H5M7 12V15H16" /><circle cx="8" cy="18" r="1" /><circle cx="15" cy="18" r="1" /></Ico></IconButton>
          <Separator />
          <IconButton aria-label="帮助"><Ico c="#454c58"><circle cx="10" cy="10" r="9" fill="#f4f6fa" /><path d="M7 8Q7 5 10 5Q13 5 13 8Q13 9 10 11V12M10 13V16" stroke="#1c4fc0" strokeWidth="2.4" /></Ico></IconButton>
          <Caret />
        </Account>
        <WindowControls>
          <IconButton $w={12} aria-label="最小化"><Ico w={10} h={12} c="#3c3c3c" sw={3}><path d="M0 11H10" /></Ico></IconButton>
          <IconButton $w={16} aria-label="还原"><Ico w={15} h={14} c="#3c3c3c"><path d="M1 6H10V13H1ZM5 6V2H14V9H10" /></Ico></IconButton>
          <IconButton $w={14} aria-label="关闭"><Cross s={13} c="#3c3c3c" /></IconButton>
        </WindowControls>
      </TitleBar>
      <TabRow>
        <FileTab>文件</FileTab>
        <RibbonTab $active>放置视图</RibbonTab>
        {["标注", "草图", "工具", "管理", "视图", "环境", "快速入门", "协作"].map((t) => <RibbonTab key={t}>{t}</RibbonTab>)}
        <PanelToggle aria-label="显示面板">
          <Ico w={19} h={12} c="#4d5568"><rect x="1" y="1" width="17" height="10" rx="3" fill="#eef0f4" /><path d="M6 8H13L9.500 4Z" fill="#444" stroke="none" /></Ico>
          <Caret c="#000" />
        </PanelToggle>
      </TabRow>
      <Ribbon>
        <Panel $w={530} $bleed>
          <PanelBody>
            <BigTool icon={<BaseIcon />} name="基础视图" />
            <BigTool icon={<ProjectedIcon />} name="投影视图" />
            <BigTool icon={<AuxIcon />} name="斜视图" />
            <BigTool icon={<SectionIcon />} name="剖视" />
            <BigTool icon={<DetailIcon />} name="局部视图" />
            <BigTool icon={<OverlayIcon />} name="重叠视图" off />
            <SmallTools>
              <SmallTool><NailIcon />钉板</SmallTool>
              <SmallTool $off><JointIcon />接头</SmallTool>
            </SmallTools>
            <InnerRule $after={4} />
            <BigTool icon={<SketchViewIcon />} name="草图视图" />
          </PanelBody>
          <PanelName>创建</PanelName>
        </Panel>
        <Panel $w={74}>
          <PanelBody $center><BigTool icon={<StartSketchIcon />} name={"开始创建\n草图"} /></PanelBody>
          <PanelName>草图</PanelName>
        </Panel>
        <Panel $w={352}>
          <PanelBody>
            <BigTool icon={<BreakIcon />} name="断裂画法" />
            <BigTool icon={<BreakOutIcon />} name="局部剖视图" />
            <BigTool icon={<SliceIcon />} name="断面图" off />
            <BigTool icon={<TrimIcon />} name="修剪" />
            <InnerRule $after={12} />
            <BigTool icon={<AlignIcon />} name="断开对齐" menu />
          </PanelBody>
          <PanelName>修改</PanelName>
        </Panel>
        <Panel $w={72} $last>
          <PanelBody $center><BigTool icon={<SheetIcon />} name="新建图纸" /></PanelBody>
          <PanelName>图纸</PanelName>
        </Panel>
      </Ribbon>
      <Work>
        <Browser>
          <BrowserHead>
            <BrowserTab><span>模型</span><button aria-label="关闭面板"><Cross /></button></BrowserTab>
            <button aria-label="添加面板"><Ico w={10} h={10} sw={2}><path d="M0 5H10M5 0V10" /></Ico></button>
            <Grow />
            <button aria-label="查找"><Ico w={16} h={16} sw={2}><circle cx="7" cy="7" r="5" /><path d="M11 11L15 15" /></Ico></button>
            <button aria-label="菜单"><Ico w={14} h={12} sw={2}><path d="M0 1H14M0 6H14M0 11H14" /></Ico></button>
          </BrowserHead>
          <Tree>
            {nodes.map((n, i) => (
              <TreeRow key={i} $depth={n.depth}>
                {n.depth > 0 && <Expander n={n} />}
                {treeIcons[n.icon]}
                <TreeLabel><Mixed text={n.label} /></TreeLabel>
              </TreeRow>
            ))}
          </Tree>
        </Browser>
        <Stage>
          <Canvas>
            <Sheet />
            <ViewLayout aria-label="视图布局"><Ico w={12} h={11} c="#444" sw={1}><path d="M0 1H12" strokeWidth="2" /><path d="M0 0V10H12V0M6 1V10M6 5H12" /></Ico></ViewLayout>
            <NavBar>
              <Ico w={22} h={20} c="#8792a2"><circle cx="10" cy="10" r="9" fill="#d5dbe4" /><circle cx="10" cy="10" r="4" /></Ico>
              <Ico w={22} h={24} c="#788494" sw={1}><path d="M-1 0H22" /><path d="M9 29Q6 21 1 20Q1 17 8 20L6 9Q9 6 11 16L12 8Q15 6 15 15L18 9V29Z" fill="#dde2ea" /></Ico>
              <Ico w={22} h={22} c="#788494" sw={1}><path d="M5 5H8V9H12V12H8V16H5V12H1V9H5ZM1 18H12V20H1Z" fill="#cfd6e0" /></Ico>
              <Ico w={22} h={22} c="#788494" sw={1}><path d="M2 3H12V6H20V21H2Z" fill="#dde2ea" /></Ico>
              <Ico w={22} h={22} c="#788494" sw={1}><path d="M1 3H20V19H1Z" /></Ico>
            </NavBar>
            <Dialog role="dialog" aria-label="检索模型标注">
              <DialogHead>检索模型标注(正交)<button aria-label="关闭"><Cross s={12} c="#888" sw={1} /></button></DialogHead>
              <DialogBody>
                <DialogTabs><DialogTab $active>草图和特征尺寸</DialogTab><DialogTab>三维标注</DialogTab></DialogTabs>
                <DialogPage>
                  <PageInner>
                    <Source>
                      <legend>选择来源(<u>S</u>)</legend>
                      <PickButton $on aria-label="选择">
                        <Ico w={18} h={20} sw={1} c="#000"><path d="M1 2V13M1 5H4M1 13H4" /><path d="M6 5L9 1H15V8L12 11H6Z" fill="#18d8e8" /><path d="M6 5H12V11M12 5L15 1" /><path d="M0 1H4V3H0ZM4 11H8V14H4Z" fill="#ff0" stroke="none" /><Cursor x={9} y={7} /></Ico>
                      </PickButton>
                      <Choices>
                        <Choice><Radio type="radio" name="source" checked={source === "feature"} onChange={() => setSource("feature")} /><span>选择特征(<u>F</u>)</span></Choice>
                        <Choice><Radio type="radio" name="source" checked={source === "part"} onChange={() => setSource("part")} /><span>选择零件(<u>P</u>)</span></Choice>
                      </Choices>
                    </Source>
                  </PageInner>
                </DialogPage>
                <PickView>
                  <PickButton id="pick-view">
                    <Ico w={20} h={18} sw={1} c="#000"><rect x="0" y="1" width="15" height="13" strokeDasharray="1 1" /><path d="M2 4H10M2 2V6M10 2V6" stroke="#087" /><rect x="3" y="7" width="6" height="4" fill="#18e8f0" /><Cursor x={11} y={4} /></Ico>
                  </PickButton>
                  <label htmlFor="pick-view">选择视图(<u>V</u>)</label>
                </PickView>
                <Actions>
                  <PickButton aria-label="帮助"><Ico w={16} h={16} sw={1} c="#333"><path d="M1 1H15V12H11L9 15L8 12H1Z" fill="#f2f5f9" /><path d="M6 5Q6 3 8 3Q10 3 10 5L8 7V8M8 9V11" strokeWidth="2" /></Ico></PickButton>
                  <Grow />
                  <Action disabled>确定</Action><Action>取消</Action><Action disabled>应用</Action>
                </Actions>
              </DialogBody>
            </Dialog>
          </Canvas>
          <DocTabs>
            <IconButton $w={28} aria-label="主页"><House /></IconButton>
            {["test_part_1.ipt", "test_part_1.iam", "front_axial.iam", "compressor.iam", "turbine_disk.iam", "rear_axial.iam"].map((t) => <DocTab key={t}>{t}</DocTab>)}
            <ActiveDoc><button>compressor.dwg</button><button aria-label="关闭文档"><Cross sw={3} /></button></ActiveDoc>
            <Grow />
            <button aria-label="文档列表"><Ico w={7} h={16} sw={2}><path d="M0 1H18M0 7H18M0 13H18" /></Ico></button>
          </DocTabs>
          <Watermark>
            <svg width="72" height="82" viewBox="0 0 72 82" opacity="0.88" aria-hidden="true">
              <path d="M36 0L50 8Q57 18 54 30L36 19L14 13Z" fill="#b3d4e8" />
              <path d="M50 8L71 20V40Q66 56 46 61L54 45V30Q56 18 50 8Z" fill="#5bb2e0" />
              <path d="M71 40V61L58 68Q46 71 34 63L54 52Q66 50 71 36Z" fill="#47a2d6" />
              <path d="M58 68L36 82L22 74Q15 64 17 53L34 63Q46 71 58 68Z" fill="#5dbbe6" />
              <path d="M22 74L0 61V48Q4 36 17 31V53Q15 64 22 74Z" fill="#74bfe3" />
              <path d="M0 50V22L14 14Q24 12 33 19L17 29Q4 36 0 50Z" fill="#86c2e2" />
              <path d="M36 19L56 31V52L36 63L16 52V31Z" fill="#aab9cf" />
              <path d="M36 22L52 32L36 41L20 32Z" fill="#8cc6e6" /><path d="M20 32L36 41V59L20 50Z" fill="#68b0dc" /><path d="M52 32V50L36 59V41Z" fill="#4298d0" />
            </svg>
            <WatermarkText>
              <WatermarkName>3D<WatermarkHan>世界网</WatermarkHan></WatermarkName>
              <WatermarkUrl>WWW.3DSJW.COM</WatermarkUrl>
            </WatermarkText>
          </Watermark>
        </Stage>
      </Work>
    </Shell>
  );
}
